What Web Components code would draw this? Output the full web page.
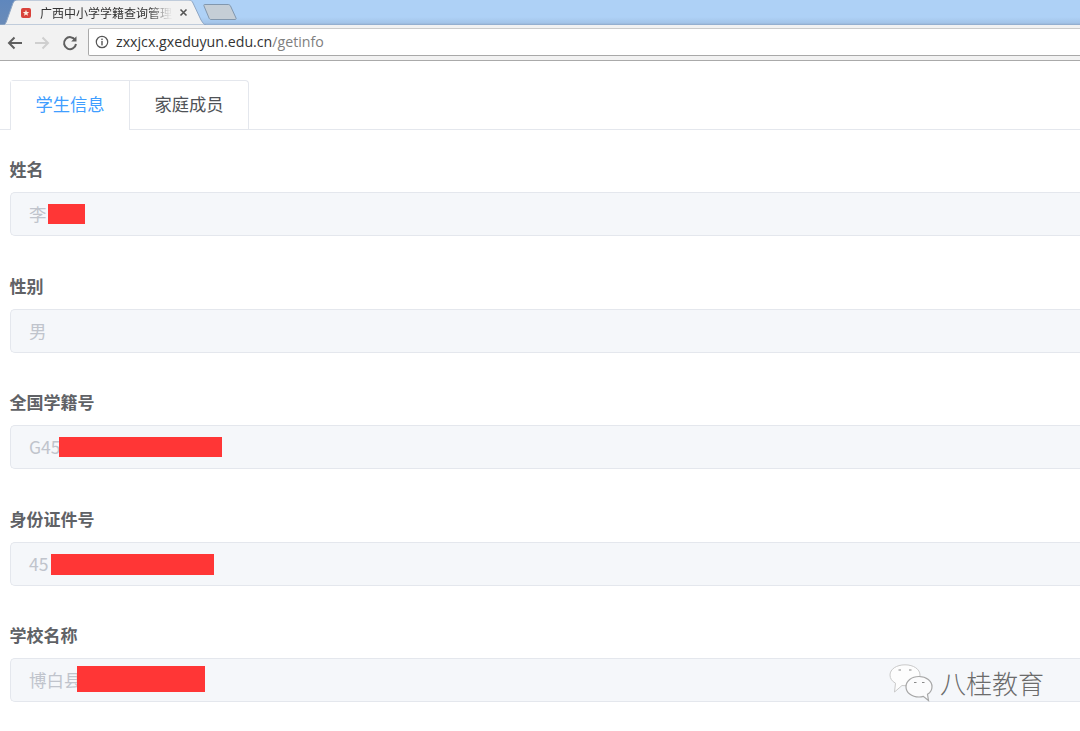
<!DOCTYPE html>
<html>
<head>
<meta charset="utf-8">
<style>
  html, body { margin: 0; padding: 0; background: #fff; overflow: hidden; }
  body { width: 1080px; height: 731px; position: relative; font-family: "Noto Sans CJK SC", "Liberation Sans", sans-serif; }
</style>
</head>
<body>
<browser-chrome url-host="zxxjcx.gxeduyun.edu.cn" url-path="/getinfo" tab-title="广西中小学学籍查询管理"></browser-chrome>
<info-tabs>
  <tab-item active>学生信息</tab-item>
  <tab-item>家庭成员</tab-item>
</info-tabs>
<form-field label="姓名" value="李" cover-left="37" cover-width="37" cover-top="11" cover-height="20"></form-field>
<form-field label="性别" value="男"></form-field>
<form-field label="全国学籍号" value="G45" cover-left="48" cover-width="163" cover-top="11" cover-height="20"></form-field>
<form-field label="身份证件号" value="45" cover-left="40" cover-width="163" cover-top="11" cover-height="21"></form-field>
<form-field label="学校名称" value="博白县" cover-left="66" cover-width="128" cover-top="7" cover-height="26"></form-field>
<wechat-mark>八桂教育</wechat-mark>

<script>
const chromeTemplate = document.createElement('template');
chromeTemplate.innerHTML = `
<style>
  :host { display: block; height: 61px; background: #f2f2f2; }
  .strip {
    height: 25px; display: flex; align-items: flex-end; position: relative;
    background: linear-gradient(#aed1f6 0, #aed1f6 17px, #a3c4e8 23px, #8ea8c8 25px);
  }
  .edge { width: 16px; height: 25px; background: linear-gradient(#5f87bd, #6a8bb8); flex: none; }
  .tab { position: relative; width: 206px; height: 25px; margin-left: -16px; flex: none; display: flex; align-items: center; }
  .tab svg.shape { position: absolute; left: 0; top: 0; }
  .fav { position: relative; margin-left: 21px; width: 10px; height: 10px; flex: none; }
  .title {
    position: relative; margin-left: 9px; width: 132px; flex: none; white-space: nowrap;
    font-size: 12px; line-height: 16px; color: #333;
    -webkit-mask-image: linear-gradient(90deg, #000 82%, rgba(0,0,0,.08) 98%);
  }
  .close { position: relative; margin-left: 7px; width: 9px; height: 9px; flex: none; }
  .newtab { margin-left: -3px; margin-bottom: 4px; flex: none; display: block; }
  .tools {
    height: 36px; display: flex; align-items: center; box-sizing: border-box;
    border-bottom: 1px solid #aaa; padding-left: 6px; background: #f2f2f2;
  }
  .tools svg.nav { flex: none; display: block; }
  .omni {
    flex: 1; height: 28px; margin-left: 9px; margin-right: -4px; box-sizing: border-box; align-self: flex-start; margin-top: 3px;
    background: #fff; border: 1px solid #a9a9a9; border-top-color: #cbcbcb; border-radius: 2px 0 0 2px;
    display: flex; align-items: center; padding-left: 6px;
  }
  .url { margin-left: 7px; font: 14.2px/18px "Open Sans", "Liberation Sans", sans-serif; color: #333; white-space: nowrap; }
  .url span { color: #808080; }
</style>
<div class="strip">
  <div class="edge"></div>
  <div class="tab">
    <svg class="shape" width="206" height="25" viewBox="0 0 206 25">
      <path d="M0 25 L3 25 C5 25 6 23 7 20 L13 3 C14 1 15 0 18 0 L189 0 C191 0 192 1 193 3 L201 20 C203 23 204 25 206 25 Z" fill="#f2f2f2" stroke="#8ea6c4" stroke-width="1"/>
    </svg>
    <svg class="fav" viewBox="0 0 10 10">
      <rect width="10" height="10" rx="2" fill="#d9423a"/>
      <path d="M5 1.8 L5.9 4 L8.2 4.1 L6.4 5.5 L7 7.8 L5 6.5 L3 7.8 L3.6 5.5 L1.8 4.1 L4.1 4 Z" fill="#fbeee0"/>
    </svg>
    <span class="title"></span>
    <svg class="close" viewBox="0 0 9 9"><path d="M1.500 1.500 L7.500 7.500 M7.500 1.500 L1.500 7.500" stroke="#555" stroke-width="1.6" fill="none"/></svg>
  </div>
  <svg class="newtab" width="34" height="18" viewBox="0 0 34 18">
    <path d="M1.5 1.5 L25 1.5 C26 1.5 27 2 27.5 3 L33 15 C33.4 16 33 16.5 32 16.5 L8 16.5 C7 16.5 6.5 16 6 15 L1 3 C0.7 2 0.8 1.5 1.5 1.5 Z" fill="#c5ced6" stroke="#8297ad"/>
  </svg>
</div>
<div class="tools">
  <svg class="nav" width="18" height="18" viewBox="0 0 18 18"><path d="M16 9 L3 9 M8.5 3.5 L3 9 L8.5 14.5" stroke="#5f5f5f" stroke-width="2" fill="none"/></svg>
  <svg class="nav" width="18" height="18" viewBox="0 0 18 18" style="margin-left:9px"><path d="M2 9 L15 9 M9.5 3.5 L15 9 L9.5 14.5" stroke="#cfcfcf" stroke-width="2" fill="none"/></svg>
  <svg class="nav" width="18" height="18" viewBox="0 0 18 18" style="margin-left:10px"><path d="M14.2 6 A6 6 0 1 0 15 10" stroke="#5f5f5f" stroke-width="2" fill="none"/><path d="M15.5 2.2 L15.5 7.5 L10.2 7.5 Z" fill="#5f5f5f"/></svg>
  <div class="omni">
    <svg width="14" height="14" viewBox="0 0 14 14" style="flex:none"><circle cx="7" cy="7" r="5.7" stroke="#555" stroke-width="1.2" fill="none"/><rect x="6.3" y="6" width="1.4" height="4.4" fill="#555"/><rect x="6.3" y="3.6" width="1.4" height="1.5" fill="#555"/></svg>
    <div class="url"></div>
  </div>
</div>`;

class BrowserChrome extends HTMLElement {
  constructor() {
    super();
    this.attachShadow({ mode: 'open' });
    this.shadowRoot.appendChild(chromeTemplate.content.cloneNode(true));
    this.shadowRoot.querySelector('.title').textContent = this.getAttribute('tab-title');
    const url = this.shadowRoot.querySelector('.url');
    url.textContent = this.getAttribute('url-host');
    const path = document.createElement('span');
    path.textContent = this.getAttribute('url-path');
    url.appendChild(path);
  }
}

const tabsTemplate = document.createElement('template');
tabsTemplate.innerHTML = `
<style>
  :host { display: flex; height: 50px; margin: 19px 0 0 0; padding-left: 10px; position: relative; }
  :host::after { content: ""; position: absolute; left: 0; right: 0; bottom: 0; height: 1px; background: #e4e7ed; }
  .group { display: flex; border: 1px solid #e4e7ed; border-bottom: 0; border-radius: 4px 4px 0 0; position: relative; z-index: 1; }
</style>
<div class="group"><slot></slot></div>`;

class InfoTabs extends HTMLElement {
  constructor() {
    super();
    this.attachShadow({ mode: 'open' });
    this.shadowRoot.appendChild(tabsTemplate.content.cloneNode(true));
  }
}

const tabItemTemplate = document.createElement('template');
tabItemTemplate.innerHTML = `
<style>
  :host {
    display: block; box-sizing: border-box; width: 119px; height: 49px; line-height: 46px; text-align: center;
    font-size: 17.3px; color: #4f5257; border-left: 1px solid #e4e7ed;
    font-family: "Noto Sans CJK SC", "Liberation Sans", sans-serif;
  }
  :host(:first-child) { border-left: 0; width: 118px; }
  :host([active]) { color: #409eff; height: 50px; background: #fff; }
</style>
<slot></slot>`;

class TabItem extends HTMLElement {
  constructor() {
    super();
    this.attachShadow({ mode: 'open' });
    this.shadowRoot.appendChild(tabItemTemplate.content.cloneNode(true));
  }
}

const fieldTemplate = document.createElement('template');
fieldTemplate.innerHTML = `
<style>
  :host { display: block; height: 116.5px; padding: 0 0 0 10px; box-sizing: border-box; font-family: "Noto Sans CJK SC", "Liberation Sans", sans-serif; }
  .label { height: 62px; box-sizing: border-box; padding-top: 27px; line-height: 24px; font-size: 17px; font-weight: 700; color: #606266; margin-left: -0.5px; }
  .input {
    position: relative; height: 44px; box-sizing: border-box; margin-right: -10px;
    background: #f5f7fa; border: 1px solid #e4e7ed; border-right: 0; border-radius: 5px 0 0 5px;
    padding-left: 18px; line-height: 42px; font-size: 17.5px; color: #c0c4cc;
  }
  .cover { position: absolute; background: #ff3636; }
</style>
<div class="label"></div>
<div class="input"><span class="value"></span></div>`;

class FormField extends HTMLElement {
  constructor() {
    super();
    this.attachShadow({ mode: 'open' });
    this.shadowRoot.appendChild(fieldTemplate.content.cloneNode(true));
    this.shadowRoot.querySelector('.label').textContent = this.getAttribute('label');
    this.shadowRoot.querySelector('.value').textContent = this.getAttribute('value');
    // redaction block painted over the value
    if (this.hasAttribute('cover-width')) {
      const cover = document.createElement('div');
      cover.className = 'cover';
      cover.style.left = this.getAttribute('cover-left') + 'px';
      cover.style.width = this.getAttribute('cover-width') + 'px';
      cover.style.top = this.getAttribute('cover-top') + 'px';
      cover.style.height = this.getAttribute('cover-height') + 'px';
      this.shadowRoot.querySelector('.input').appendChild(cover);
    }
  }
}

const markTemplate = document.createElement('template');
markTemplate.innerHTML = `
<style>
  :host {
    position: absolute; left: 889px; top: 663px; display: flex; align-items: center; gap: 7px;
    font-family: "Noto Sans CJK SC", "Liberation Sans", sans-serif; font-size: 26px; font-weight: 300; line-height: 40px; color: #6b6b6b;
  }
  svg { flex: none; display: block; }
</style>
<svg width="44" height="38" viewBox="0 0 44 38">
  <path d="M16 0.800 C7.500 0.800 1 5.200 1 11 C1 14.500 3 17.300 6.500 19.200 L5.500 28 L13 21.500 C14 21.600 15 21.700 16 21.700 C24.500 21.700 31 17 31 11 C31 5.200 24.500 0.800 16 0.800 Z" fill="#fdfdfd" stroke="#c9c9c9" stroke-width="1"/>
  <path d="M30 12.500 C22.500 12.500 17 17 17 22.700 C17 28.500 22.500 33 30 33 C31.500 33 33 32.800 34.300 32.400 L39.500 36.500 L38.500 30.300 C41.300 28.500 43 25.800 43 22.700 C43 17 37.500 12.500 30 12.500 Z" fill="#fbfbfc" stroke="#a6a6a6" stroke-width="1.200"/>
  <path d="M9.500 6 h2.500 M20 6 h2.500 M25 18.500 h2.500 M33 18.500 h2.500" stroke="#8a8a8a" stroke-width="1.200" fill="none"/>
</svg>
<slot></slot>`;

class WechatMark extends HTMLElement {
  constructor() {
    super();
    this.attachShadow({ mode: 'open' });
    this.shadowRoot.appendChild(markTemplate.content.cloneNode(true));
  }
}

customElements.define('browser-chrome', BrowserChrome);
customElements.define('info-tabs', InfoTabs);
customElements.define('tab-item', TabItem);
customElements.define('form-field', FormField);
customElements.define('wechat-mark', WechatMark);
</script>
</body>
</html>
